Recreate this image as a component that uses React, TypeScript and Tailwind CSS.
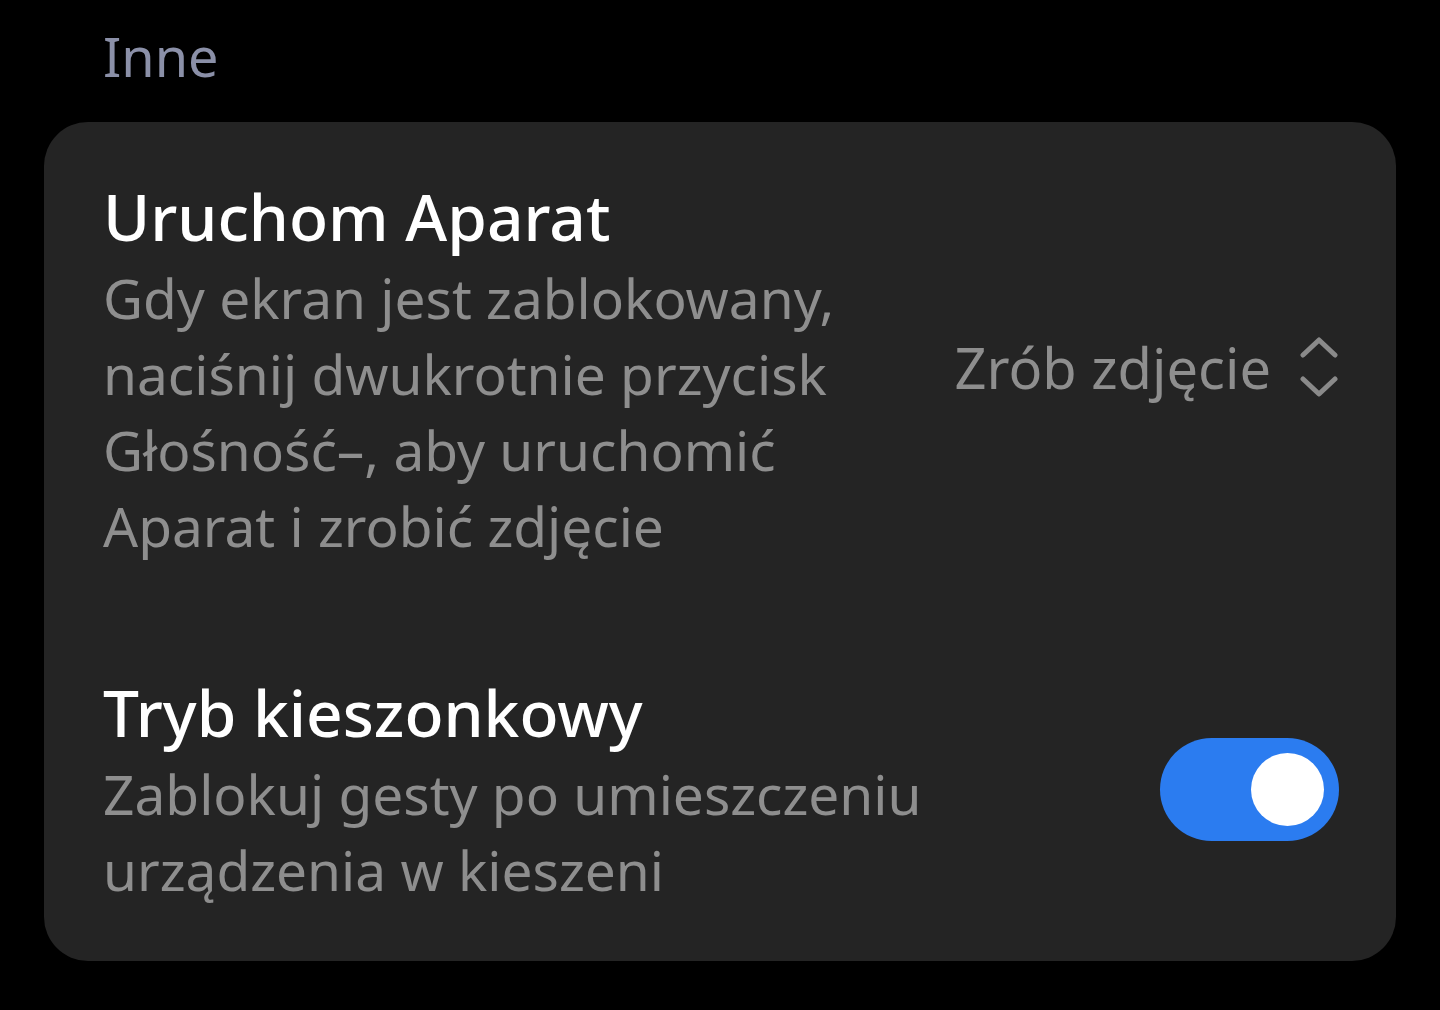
import { useState } from 'react';

const font = { fontFamily: '"Noto Sans", "Open Sans", sans-serif' };

function UpDown() {
    return (
        <svg width="40" height="60" viewBox="0 0 40 60" fill="none" className="text-[#8a8a8a]">
            <path d="M4 18 L20 3 L36 18" stroke="currentColor" strokeWidth="5" strokeLinecap="round" strokeLinejoin="round" />
            <path d="M4 42 L20 57 L36 42" stroke="currentColor" strokeWidth="5" strokeLinecap="round" strokeLinejoin="round" />
        </svg>
    );
}

function Toggle({ on, onChange }: { on: boolean; onChange: () => void }) {
    return (
        <button
            onClick={onChange}
            className={`relative w-[179px] h-[103px] rounded-full shrink-0 ${on ? 'bg-[#2b7cf0]' : 'bg-[#4a4a4a]'}`}
        >
            <span
                className={`absolute top-[15px] w-[73px] h-[73px] rounded-full bg-white ${on ? 'left-[91px]' : 'left-[15px]'}`}
            />
        </button>
    );
}

export default function App() {
    const [pocket, setPocket] = useState(true);

    return (
        <div className="w-[1440px] h-[1010px] bg-black overflow-hidden" style={font}>
            <div className="pl-[103px] pt-[21px] h-[122px] text-[54px] leading-[70px] text-[#8b90a8]">Inne</div>

            <div className="mx-[44px] rounded-[44px] bg-[#242424] pl-[59px] pr-[57px] pt-[52px] pb-[53px]">
                {/* Uruchom Aparat */}
                <div className="flex items-center justify-between">
                    <div className="w-[780px]">
                        <div className="text-[64px] leading-[86px] font-medium text-white">Uruchom Aparat</div>
                        <div className="text-[55px] leading-[76px] text-[#8e8e8e]">
                            Gdy ekran jest zablokowany, naciśnij dwukrotnie przycisk Głośność–, aby uruchomić Aparat i zrobić zdjęcie
                        </div>
                    </div>
                    <div className="flex items-center gap-[28px] -mt-[4px]">
                        <span className="text-[56px] leading-[76px] text-[#8e8e8e]">Zrób zdjęcie</span>
                        <UpDown />
                    </div>
                </div>

                {/* Tryb kieszonkowy */}
                <div className="flex items-center justify-between mt-[106px]">
                    <div className="w-[880px]">
                        <div className="text-[64px] leading-[86px] font-medium text-white">Tryb kieszonkowy</div>
                        <div className="text-[55px] leading-[76px] text-[#8e8e8e]">
                            Zablokuj gesty po umieszczeniu urządzenia w kieszeni
                        </div>
                    </div>
                    <Toggle on={pocket} onChange={() => setPocket(!pocket)} />
                </div>
            </div>
        </div>
    );
}
